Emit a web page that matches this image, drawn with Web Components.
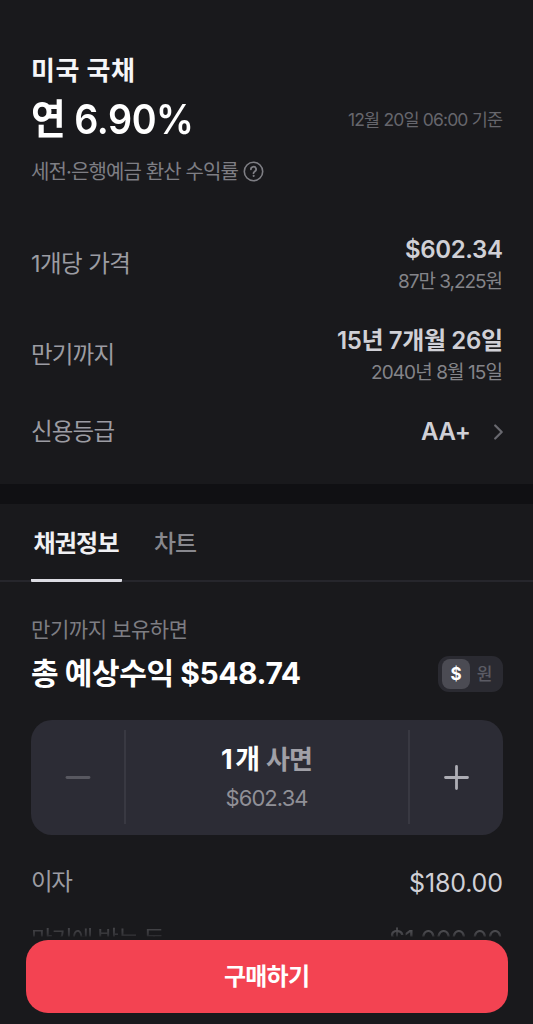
<!DOCTYPE html>
<html lang="ko">
<head>
<meta charset="utf-8">
<title>미국 국채</title>
<style>
html,body{margin:0;background:#19191c}
body{width:533px;height:1024px;overflow:hidden;font-family:Inter,"Noto Sans CJK KR",sans-serif}
</style>
</head>
<body>
<bond-page></bond-page>
<script>
const define=(name,html,base=HTMLElement)=>customElements.define(name,class extends base{
  constructor(){super();this.attachShadow({mode:'open'}).innerHTML=html;}
});

// Quote header: name, yield, timestamp and caption
define('bond-header',`<style>
:host{display:block;padding:53px 30px 0 31px}
.name{height:35px;display:flex;color:#f6f6f8}
.rate{height:50px;margin-top:6px;display:flex;justify-content:space-between;align-items:center;color:#fff}
.date{color:#66666c;margin-top:2px}
.cap{height:28px;margin-top:13px;display:flex;align-items:center;gap:4px;color:#7e7e84}
.cap fit-text{margin-top:2px}
svg{display:block}
</style>
<div class="name"><fit-text size="26" weight="700" w="104" lh="35">미국 국채</fit-text></div>
<div class="rate"><fit-text size="41" weight="600" w="163" sx=".92" lh="49">연 6.90%</fit-text><fit-text class="date" size="17.5" w="155" lh="28">12월 20일 06:00 기준</fit-text></div>
<div class="cap"><fit-text size="20" w="208" lh="28">세전·은행예금 환산 수익률</fit-text>
<svg width="21" height="21" viewBox="0 0 21 21" fill="none" stroke="currentColor" stroke-width="1.6" stroke-linecap="round"><circle cx="10.5" cy="10.5" r="9.2"/><path d="M7.9 8.3a2.6 2.5 0 1 1 3.9 2.1c-.9.55-1.3.9-1.3 1.8" stroke-width="1.8"/><circle cx="10.5" cy="14.9" r=".6" fill="currentColor" stroke-width="1"/></svg></div>`);

define('info-row',`<style>
:host{display:flex;justify-content:space-between;align-items:center;padding:0 30px 0 31px;color:#9c9ca2}
.l{display:flex;margin-top:var(--label-shift,-5px)}
.r{display:flex;flex-direction:column;align-items:flex-end}
</style><div class="l"><slot name="label"></slot></div><div class="r"><slot></slot></div>`);

define('tab-bar',`<style>
:host{display:flex;box-sizing:border-box;height:78px;padding-left:31px;gap:30px;border-bottom:2px solid #26262c}
.on,.off{display:flex;justify-content:center;box-sizing:border-box;padding-top:23px;width:91px;height:78px}
.on{color:#f0f0f3;border-bottom:3px solid #dcdce3;border-radius:1px}
.off{color:#88888e;width:47px}
</style><div class="on"><fit-text size="24" weight="700" w="86" lh="34">채권정보</fit-text></div><div class="off"><fit-text size="24" weight="500" w="43" lh="34">차트</fit-text></div>`);

define('currency-toggle',`<style>
:host{display:flex;box-sizing:border-box;width:65px;height:36px;padding:3px 4px;border-radius:11px;background:#2a2a31}
span{display:flex;align-items:center;justify-content:center;width:28px;height:30px;border-radius:8px}
.on{background:#4b4b53;color:#fff}
.off{color:#5b5b64;width:29px}
</style><span class="on"><fit-text size="17" weight="700" lh="28">$</fit-text></span><span class="off"><fit-text size="17" weight="500" lh="28">원</fit-text></span>`);

define('quantity-stepper',`<style>
:host{display:grid;grid-template-columns:93px 1fr 93px;margin:27px 30px 0 31px;height:115px;border-radius:21px;background:#2c2c35}
.b{display:flex;align-items:center;justify-content:center}
.m{display:flex;flex-direction:column;align-items:center;margin:10px 0 11px;border-left:2px solid #393942;border-right:2px solid #393942;padding-top:11px;box-sizing:border-box}
.q{display:flex;gap:6px;color:#fff;height:38px;align-items:center}
.q .s{color:#a0a0a7}
.p{display:flex;height:38px;align-items:center;color:#909097}
</style><div class="b"><svg width="26" height="26" viewBox="0 0 26 26"><path d="M2 12.5H24" stroke="#585860" stroke-width="2.8" stroke-linecap="round"/></svg></div>
<div class="m"><div class="q"><fit-text size="27" weight="700" w="39" lh="34">1개</fit-text><fit-text class="s" size="26" weight="700" w="47" lh="34">사면</fit-text></div><div class="p"><fit-text size="22" w="83" lh="30">$602.34</fit-text></div></div>
<div class="b"><svg width="26" height="26" viewBox="0 0 26 26"><path d="M1.5 12.5H23.5M12.5 1.5V23.5" stroke="#adadb4" stroke-width="2.8" stroke-linecap="round"/></svg></div>`);

define('buy-button',`<style>
:host{display:flex;align-items:center;justify-content:center;position:absolute;left:26px;top:940px;width:482px;height:73px;border-radius:22px;background:#f34352;color:#fff}
</style><slot></slot>`);

define('bond-page',`<style>
:host{display:block;position:relative;width:533px;height:1024px;overflow:hidden;background:#19191c}
.v{color:#d0d0d6}.s{color:#848489}
.r1{margin-top:49px}.r2{margin-top:27px}
.r3{margin-top:26px;--label-shift:0px}
.grade{display:flex;align-items:center;gap:23px}
.gap{height:20px;margin-top:35px;background:#101013}
.hold{margin:34px 0 0 31px;display:flex;color:#7d7d83}
.total{display:flex;align-items:center;justify-content:space-between;height:40px;padding:0 30px 0 31px;margin-top:9px;color:#fff}
.total currency-toggle{margin-top:2px}
.interest{margin-top:28px;--label-shift:-2px}
.more{margin-top:17px;--label-shift:-1px;-webkit-mask-image:linear-gradient(#0005 20%,#0003 38%,transparent 43%)}
</style>
<bond-header></bond-header>
<info-row class="r1"><fit-text slot="label" size="23.5" w="100" lh="32">1개당 가격</fit-text><fit-text class="v" size="24" weight="600" w="98" lh="32">$602.34</fit-text><fit-text class="s" size="19" w="105" lh="32">87만 3,225원</fit-text></info-row>
<info-row class="r2"><fit-text slot="label" size="23.5" w="84" lh="32">만기까지</fit-text><fit-text class="v" size="24" weight="600" w="166" lh="32">15년 7개월 26일</fit-text><fit-text class="s" size="19" w="132" lh="32">2040년 8월 15일</fit-text></info-row>
<info-row class="r3"><fit-text slot="label" size="23.5" w="84" lh="34">신용등급</fit-text><div class="grade"><fit-text class="v" size="24" weight="600" w="50" lh="34">AA+</fit-text><svg width="9" height="16" viewBox="0 0 9 16" fill="none" stroke="#69696f" stroke-width="2.2" stroke-linecap="round" stroke-linejoin="round"><path d="M1.2 1.5 7.7 8 1.2 14.5"/></svg></div></info-row>
<div class="gap"></div>
<tab-bar></tab-bar>
<div class="hold"><fit-text size="21" w="157" lh="28">만기까지 보유하면</fit-text></div>
<div class="total"><fit-text size="30" weight="700" w="270" lh="40">총 예상수익 $548.74</fit-text><currency-toggle></currency-toggle></div>
<quantity-stepper></quantity-stepper>
<info-row class="interest"><fit-text slot="label" size="23.5" w="42" lh="36">이자</fit-text><fit-text class="v" size="25" w="94" lh="40">$180.00</fit-text></info-row>
<info-row class="more"><fit-text slot="label" size="23.5" w="134" lh="36">만기에 받는 돈</fit-text><fit-text class="v" size="25" w="114" lh="40">$1,000.00</fit-text></info-row>
<buy-button><fit-text size="24" weight="700" w="86" lh="34">구매하기</fit-text></buy-button>`);

// A single line of text tracked to fill the given width; sx condenses the glyphs
customElements.define('fit-text',class extends HTMLElement{
  constructor(){
    super();
    this.attachShadow({mode:'open'}).innerHTML='<style>:host{display:block;flex:none;white-space:nowrap;width:max-content;transform-origin:0 50%}</style><slot></slot>';
  }
  connectedCallback(){
    const s=this.style,a=n=>this.getAttribute(n);
    s.fontSize=a('size')+'px';s.fontWeight=a('weight')||400;s.lineHeight=a('lh')+'px';
    if(!a('w'))return;
    const n=[...this.textContent].length-1,natural=this.getBoundingClientRect().width;
    const sx=+(a('sx')||1),ls=(a('w')/sx-natural)/n;
    s.letterSpacing=ls+'px';
    s.marginRight=-ls+'px';
    if(sx!==1)s.transform='scaleX('+sx+')';
  }
});
</script>
</body>
</html>
